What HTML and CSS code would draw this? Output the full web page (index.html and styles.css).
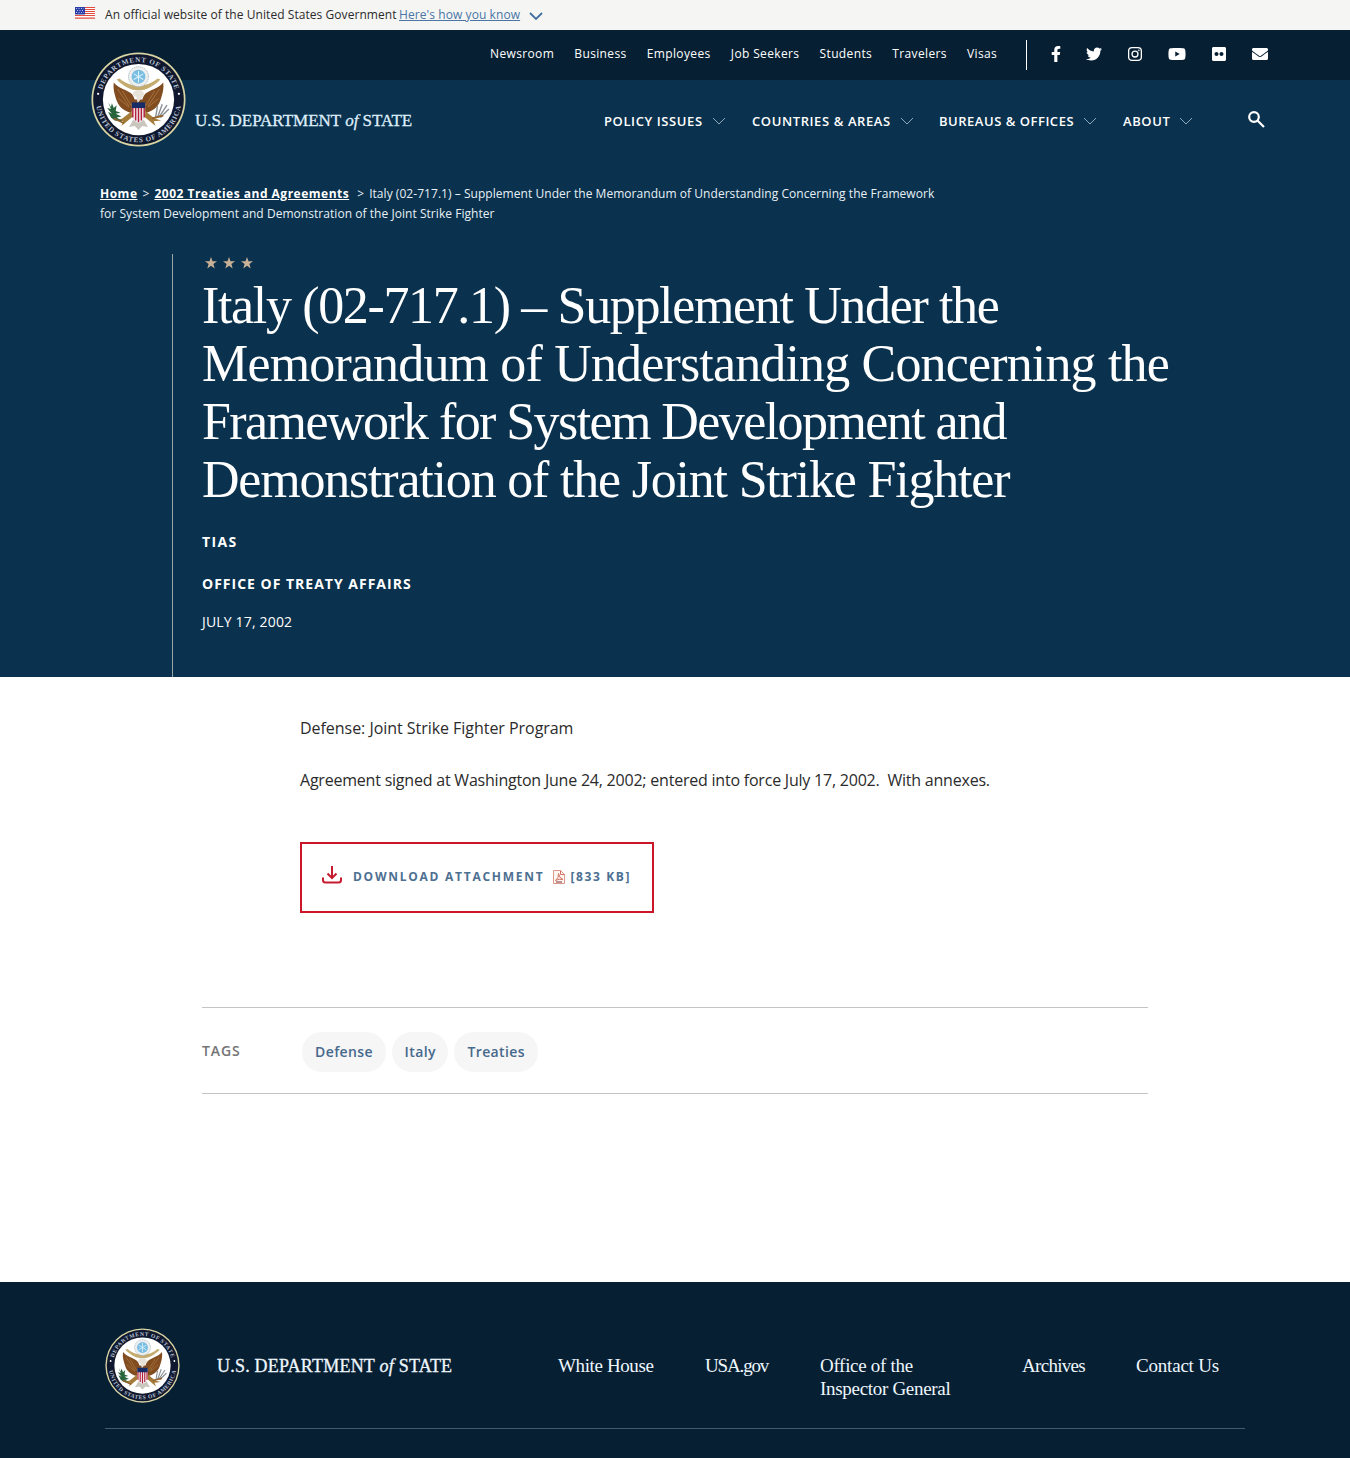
FILE: index.html
```html
<!DOCTYPE html>
<html lang="en">
<head>
<meta charset="utf-8">
<title>Italy (02-717.1) – United States Department of State</title>
<link rel="stylesheet" href="styles.css">
</head>
<body>
<svg class="defs" width="0" height="0" aria-hidden="true">
  <symbol id="chevron" viewBox="0 0 14 8"><path d="M1 1l6 6 6-6" fill="none" stroke="currentColor"/></symbol>
  <symbol id="star" viewBox="0 0 12 12"><path d="M6 0l1.5 4.2H12L8.4 6.9 9.700 11.400 6 8.700 2.300 11.400 3.600 6.900 0 4.200h4.500z" fill="currentColor"/></symbol>
</svg>

<div class="gov">
  <svg class="flag" viewBox="0 0 20 12"><path fill="#fff" d="M0 0h20v12H0z"/><path stroke="#e34b3c" stroke-width="1.2" d="M9 .5h11M9 2.500h11M9 4.500h11M9 6.500h11M0 8.500h20M0 11.200h20"/><path fill="#2b3fa6" d="M0 0h10v7.500H0z"/><path stroke="#b9c1ee" stroke-dasharray="1 1.500" d="M1 1.500h8M2 3.500h7M1 5.500h8"/></svg>
  <span class="gov-text">An official website of the United States Government</span>
  <a class="gov-link">Here's how you know</a>
  <svg class="gov-chev"><use href="#chevron"/></svg>
</div>

<header>
  <div class="topbar">
    <nav class="utility"><a>Newsroom</a><a>Business</a><a>Employees</a><a>Job Seekers</a><a>Students</a><a>Travelers</a><a>Visas</a></nav>
    <div class="social">
      <svg width="10" height="16" viewBox="0 0 320 512"><path d="M279 288l14-93h-89v-60c0-25 12-50 52-50h41V6s-37-6-72-6c-73 0-121 44-121 125v70H23v93h81v224h100V288z"/></svg>
      <svg class="nudge" width="16" height="16" viewBox="0 0 512 512"><path d="M459 152c0 4 0 9 0 14 0 138-105 298-298 298-59 0-114-17-161-47 8 1 16 1 25 1 49 0 94-16 130-45-46-1-85-31-98-73 7 1 13 2 20 2 9 0 19-1 28-4-48-10-84-52-84-103v-1c14 8 30 13 47 13-28-19-46-51-46-87 0-19 5-37 14-53 51 64 129 105 216 110-2-8-3-16-3-24 0-58 47-105 105-105 30 0 57 13 77 33 24-5 46-13 66-25-8 24-24 45-46 58 21-2 42-8 60-16-14 21-32 39-52 54z"/></svg>
      <svg width="14" height="16" viewBox="0 0 448 512" class="line nudge"><rect x="20" y="52" width="408" height="408" rx="110"/><circle cx="224" cy="256" r="95"/><circle cx="344" cy="137" r="8"/></svg>
      <svg width="18" height="16" viewBox="0 0 576 512"><path fill-rule="evenodd" d="M550 124c-6-24-25-42-49-49-42-11-213-11-213-11s-171 0-213 11c-24 7-43 25-49 49-12 43-12 132-12 132s0 90 12 133c6 23 25 41 49 48 42 11 213 11 213 11s171 0 213-11c24-7 43-25 49-48 12-43 12-133 12-133s0-89-12-132zM232 338V175l143 81z"/></svg>
      <svg width="14" height="16" viewBox="0 0 448 512"><path fill-rule="evenodd" d="M400 32H48C22 32 0 54 0 80v352c0 26 22 48 48 48h352c26 0 48-22 48-48V80c0-26-22-48-48-48zM144 319c-35 0-63-28-63-63s28-63 63-63 64 28 64 63-29 63-64 63zm160 0c-35 0-64-28-64-63s29-63 64-63 63 28 63 63-28 63-63 63z"/></svg>
      <svg width="16" height="16" viewBox="0 0 512 512"><path d="M502 191c4-3 10 0 10 5v204c0 27-21 48-48 48H48c-27 0-48-21-48-48V196c0-5 6-8 10-5 22 17 52 40 155 114 21 16 57 48 91 48 34 0 71-33 91-48 103-74 133-97 155-114zM256 320c23 0 57-29 74-41 133-97 143-105 173-129 6-4 9-11 9-19v-19c0-27-21-48-48-48H48c-27 0-48 21-48 48v19c0 8 3 14 9 19 30 24 40 32 173 129 17 12 51 41 74 41z"/></svg>
    </div>
  </div>
  <a class="logo"><svg class="seal" viewBox="0 0 100 100"><g id="seal">
    <circle cx="50" cy="50" r="49.500" fill="#d9d5a4"/>
    <circle cx="50" cy="50" r="47.700" fill="#10182f"/>
    <circle cx="50" cy="50" r="37.500" fill="#fff"/>
    <path id="arcTop" d="M10.500 50a39.500 39.500 0 0 1 79 0" fill="none"/>
    <path id="arcBottom" d="M5 50a45 45 0 0 0 90 0" fill="none"/>
    <g class="seal-text">
      <text><textPath href="#arcTop" startOffset="50%" text-anchor="middle" textLength="103">DEPARTMENT OF STATE</textPath></text>
      <text><textPath href="#arcBottom" startOffset="50%" text-anchor="middle" textLength="127">UNITED STATES OF AMERICA</textPath></text>
    </g>
    <circle cx="7.500" cy="44" r="1.200" fill="#fff"/><circle cx="92.500" cy="44" r="1.200" fill="#fff"/>
    <path d="M50 36C42 35 36 33 30 28l-3 1 2 2C37 38 45 41 50 40c5 1 13-2 21-9l2-2-3-1c-6 5-12 7-20 8z" fill="#c4ab70"/>
    <path d="M50 65c-11 0-20-5-23-14-2-6-4-12-3-19 5 6 11 7 16 10 4 2 5 5 6 8h8c1-3 2-6 6-8 5-3 11-4 16-10 1 7-1 13-3 19-3 9-12 14-23 14z" fill="#814d20"/>
    <path d="M28 39l12 18M33 41l9 15M72 39L60 57M67 41l-9 15M29 49l11 9M71 49l-11 9" stroke="#b37c43" stroke-width=".8"/>
    <path d="M43 62l-10 8-7 2 8 1-2 5 7-6 6-5M57 62l10 8 7 2-8 1 2 5-7-6-6-5" fill="#a57b38"/>
    <path d="M43 74c0-5 14-5 14 0l3 5-6-1-4 4-4-4-6 1z" fill="#c9c6bd"/>
    <circle cx="50" cy="26" r="10.500" fill="#eee" stroke="#9db4bd" stroke-width=".9" stroke-dasharray="1.500 .7"/>
    <circle cx="50" cy="26" r="7.300" fill="#79bee2"/>
    <path d="M50 20v12M45 23l10 6M55 23l-10 6" stroke="#d9f0fa" stroke-width="1.100"/>
    <path d="M44 45c0-4 4-5 6-5s6 1 6 5l-4 5-3 4-1-6z" fill="#e8e3d8"/>
    <path d="M43 54h14v11c0 6-3 8-7 10-4-2-7-4-7-10z" fill="#eee"/>
    <path d="M44 58v11M47 58v14M50 58v16M53 58v14M56 58v11" stroke="#b51d3d" stroke-width="1.500"/>
    <path d="M43 53h14v6H43z" fill="#172c67"/>
    <path d="M18 53l3 5 1-4 2 5 3-3-1 6 5 2-5 1 6 3-5 1 6 4-8-1-4-3-3-6 4 2-5-6 4 1z" fill="#28643c"/>
    <path d="M70 69l5-14M72 68l8-12M73 69l9-9M68 69l2-12" stroke="#8b9094" stroke-width="1.500"/>
    <path d="M64 70l12-3M24 70l11 5" stroke="#936430" stroke-width="2"/>
  </g></svg><span>U.S. DEPARTMENT <i>of</i> STATE</span></a>
  <nav class="main">
    <a>POLICY ISSUES<svg><use href="#chevron"/></svg></a>
    <a>COUNTRIES &amp; AREAS<svg><use href="#chevron"/></svg></a>
    <a>BUREAUS &amp; OFFICES<svg><use href="#chevron"/></svg></a>
    <a>ABOUT<svg><use href="#chevron"/></svg></a>
    <svg class="search" viewBox="0 0 17 17"><circle cx="6" cy="6" r="4.800"/><path d="M9.500 9.500l6.500 6.500"/></svg>
  </nav>
  <div class="crumbs"><div><a class="c-home">Home</a><span class="sep">&gt;</span><a class="c-list">2002 Treaties and Agreements</a><span class="sep wide">&gt;</span><span>Italy (02-717.1) – Supplement Under the Memorandum of Understanding Concerning the Framework</span></div><div>for System Development and Demonstration of the Joint Strike Fighter</div></div>
  <div class="hero">
    <div class="stars"><svg><use href="#star"/></svg><svg><use href="#star"/></svg><svg><use href="#star"/></svg></div>
    <h1><span class="t1">Italy (02-717.1) – Supplement Under the</span><span class="t2">Memorandum of Understanding Concerning the</span><span class="t3">Framework for System Development and</span><span class="t4">Demonstration of the Joint Strike Fighter</span></h1>
    <p class="kicker tias">TIAS</p>
    <p class="kicker office">OFFICE OF TREATY AFFAIRS</p>
    <p class="date">JULY 17, 2002</p>
  </div>
</header>

<main>
  <div class="body">
    <p class="p1">Defense: Joint Strike Fighter Program</p>
    <p class="p2">Agreement signed at Washington June 24, 2002; entered into force July 17, 2002.&nbsp; With annexes.</p>
    <a class="download">
      <svg class="dl" viewBox="0 0 20 18"><path d="M10 0v11.500M5.500 7.500l4.500 4.500 4.500-4.500M1 11.500v2.500q0 2.500 2.500 2.500h13q2.500 0 2.500-2.500v-2.500"/></svg>
      <span>DOWNLOAD ATTACHMENT</span>
      <svg class="pdf" viewBox="0 0 12 14"><path fill="#fff5f1" stroke="#dd9a8c" d="M.5.500h7l4 4v9H.5z"/><path fill="none" stroke="#d37465" d="M7.500.500v4h4M2.500 10.500Q6 8 5.500 3.500 6 8 10 9.500 6 8.500 2.500 10.500"/><path stroke="#75333a" d="M3 12h6"/></svg>
      <span class="size">[833 KB]</span>
    </a>
  </div>
  <section class="tags"><h2>TAGS</h2><a>Defense</a><a>Italy</a><a>Treaties</a></section>
</main>

<footer>
  <div class="foot">
    <svg class="seal" viewBox="0 0 100 100"><use href="#seal"/></svg>
    <span class="foot-name">U.S. DEPARTMENT <i>of</i> STATE</span>
    <nav><a class="f1">White House</a><a class="f2">USA.gov</a><a class="f3">Office of the<br>Inspector General</a><a class="f4">Archives</a><a class="f5">Contact Us</a></nav>
  </div>
</footer>
</body>
</html>
```
FILE: styles.css
```css
* { box-sizing: border-box; }
body { margin: 0; font-family: "Open Sans", sans-serif; color: #2b2b2b; background: #fff; }
svg { display: block; flex: none; }
p, h1, h2 { margin: 0; }
.defs { position: absolute; }
.gov { height: 30px; background: #f5f5f4; display: flex; padding-left: 75px; font-size: 12px; line-height: 30px; white-space: nowrap; }
.flag { width: 20px; height: 12px; margin: 7px 10px 0 0; }
.gov-text { width: 294px; letter-spacing: .06px; }
.gov-link { color: #4a75a5; text-decoration: underline; width: 130px; letter-spacing: .08px; }
.gov-chev { width: 14px; height: 8px; margin-top: 12px; color: #42709f; stroke-width: 1.8; }
header { position: relative; height: 647px; background: #0a314d; color: #fff; }
.topbar { height: 50px; background: #071f33; display: flex; padding: 10px 82px 0 490px; justify-content: space-between; white-space: nowrap; }
.utility { display: flex; gap: 20.2px; font-size: 12px; line-height: 28px; letter-spacing: .36px; }
.social { width: 242px; height: 30px; border-left: 1px solid #fff; padding: 6px 0 0 24px; display: flex; justify-content: space-between; fill: #fff; }
.social .line { fill: none; stroke: #fff; stroke-width: 42; }
.nudge { margin: 0 1px 0 -1px; }
.logo { position: absolute; left: 91px; top: 22px; display: flex; gap: 9px; color: #dfeefa; }
.logo .seal { width: 95px; height: 95px; }
.logo span { font: 17px/20px "Liberation Serif", serif; margin-top: 59px; white-space: nowrap; -webkit-text-stroke: .3px; }
.seal-text { font: bold 7.500px "Liberation Serif", serif; fill: #b9c4d6; }
.main { display: grid; grid-template-columns: 148px 187px 184px 72px 1fr; height: 82px; padding: 0 85px 0 604px; align-items: center; font-size: 13px; font-weight: 600; letter-spacing: .6px; white-space: nowrap; }
.main a { display: flex; align-items: center; }
.main a svg { width: 14px; height: 8px; margin-left: 9px; color: #8fa9bb; }
.main a:nth-child(3) { letter-spacing: .52px; }
.main .search { width: 17px; height: 17px; margin-bottom: 4px; justify-self: end; fill: none; stroke: #fff; stroke-width: 2.200; }
.crumbs { padding: 22px 0 0 100px; height: 92px; font-size: 12px; line-height: 20px; white-space: nowrap; color: #e8f0f6; letter-spacing: .045px; }
.crumbs a { color: #fff; font-weight: 700; text-decoration: underline; letter-spacing: .5px; }
.sep { margin: 0 5px; }
.sep.wide { margin-left: 8px; }
.hero { margin-left: 172px; height: 423px; border-left: 1px solid #9aa5a5; padding: 3px 0 0 29px; }
.stars { display: flex; gap: 6px; padding: 0 0 0 3px; height: 20px; color: #c8b196; }
.stars svg { width: 12px; height: 12px; }
h1 { font: 400 52px/58px "Liberation Serif", serif; }
h1 span { display: block; white-space: nowrap; }
.t1 { letter-spacing: -1.35px; }
.t2 { letter-spacing: -.84px; }
.t3 { letter-spacing: -1.58px; }
.t4 { letter-spacing: -1.2px; }
.kicker { font-size: 14px; line-height: 20px; font-weight: 700; letter-spacing: 1px; }
.tias { margin-top: 23px; letter-spacing: 1.4px; }
.office { margin-top: 22px; }
.date { font-size: 14px; line-height: 20px; margin-top: 18px; letter-spacing: .17px; }
main { height: 605px; padding: 38px 202px 0; }
.body { margin-left: 98px; height: 292px; font-size: 16px; line-height: 26px; white-space: nowrap; }
.p1 { letter-spacing: -.04px; }
.p2 { margin-top: 26px; letter-spacing: -.215px; }
.download { margin-top: 49px; width: 354px; height: 71px; border: 2px solid #cb1629; display: flex; align-items: center; padding: 0 0 2px 20px; font-size: 12px; font-weight: 700; letter-spacing: 1.740px; color: #4d7092; }
.dl { width: 20px; height: 18px; margin-right: 11px; margin-bottom: 3px; fill: none; stroke: #c61a30; stroke-width: 2; }
.pdf { width: 12px; height: 14px; margin: 1px 6px 0 8px; }
.size { letter-spacing: 1.6px; }
.tags { height: 87px; border: solid #c4c4c4; border-width: 1px 0; display: flex; align-items: center; padding-top: 2px; font-size: 14px; font-weight: 600; color: #46698d; letter-spacing: .4px; }
.tags h2 { font-size: 14px; font-weight: 600; color: #747474; width: 100px; letter-spacing: .9px; padding-bottom: 2px; }
.tags a { height: 40px; line-height: 40px; padding: 0 12.5px 0 13px; background: #f6f6f6; border-radius: 20px; margin-right: 6px; }
footer { height: 176px; background: #071f33; padding: 46px 105px 0; color: #eef6fc; }
.foot { display: flex; height: 101px; border-bottom: 1px solid #405a70; font-family: "Liberation Serif", serif; white-space: nowrap; }
.foot .seal { width: 75px; height: 75px; margin-right: 37px; }
.foot-name { width: 341px; font-size: 18px; line-height: 22px; margin-top: 27px; letter-spacing: .22px; -webkit-text-stroke: .3px; }
.foot nav { display: flex; font-size: 19px; line-height: 23px; margin-top: 26px; letter-spacing: -.2px; }
.f1 { width: 147px; letter-spacing: -.38px; }
.f2 { width: 115px; letter-spacing: -1.15px; }
.f3 { width: 202px; letter-spacing: -.3px; }
.f4 { width: 114px; letter-spacing: -.7px; }
```
